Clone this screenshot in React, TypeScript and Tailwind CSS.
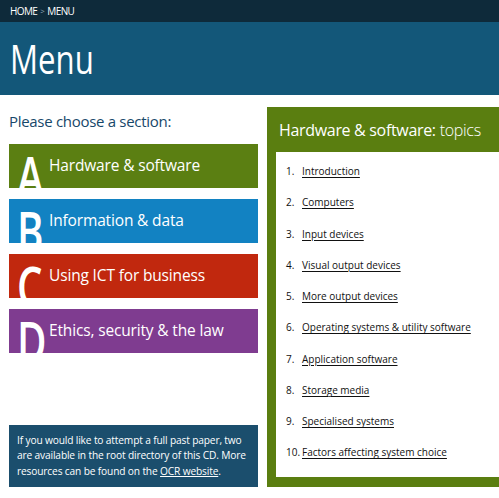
const sections = [
  {letter: 'A', label: 'Hardware & software', bg: 'bg-[#5b7f12]'},
  {letter: 'B', label: 'Information & data', bg: 'bg-[#1282c2]'},
  {letter: 'C', label: 'Using ICT for business', bg: 'bg-[#c1280e]'},
  {letter: 'D', label: 'Ethics, security & the law', bg: 'bg-[#7f3c90]'},
]

const topics = [
  'Introduction',
  'Computers',
  'Input devices',
  'Visual output devices',
  'More output devices',
  'Operating systems & utility software',
  'Application software',
  'Storage media',
  'Specialised systems',
  'Factors affecting system choice',
]

export default function App() {
  return (
    <div className="flex h-[498px] w-[499px] flex-col overflow-hidden bg-white font-['Open_Sans',sans-serif]">
      <div className="flex h-[22px] shrink-0 items-center bg-[#0e2a3a] pl-[10px] text-[10px] uppercase tracking-[-0.06em] text-white">
        <span>Home</span>
        <span className="mx-[3px] text-[8px] text-[#8fa9b8]">&gt;</span>
        <span>Menu</span>
      </div>
      <header className="flex h-[73px] shrink-0 items-center bg-[#135779] pl-[10px]">
        <h1 className="origin-left scale-x-[0.76] text-[41px] leading-none text-white">Menu</h1>
      </header>

      <main className="flex flex-1 gap-[9px] pb-[11px] pl-[9px] pt-[12px]">
        <section className="flex w-[249px] shrink-0 flex-col justify-between">
          <div>
            <p className="mt-[4px] text-[15px] leading-[20px] tracking-[-0.02em] text-[#17486a]">
              Please choose a section:
            </p>
            <ul className="mt-[13px] flex flex-col gap-[11px]">
              {sections.map((s) => (
                <li key={s.letter} className={`flex h-[44px] overflow-hidden ${s.bg}`}>
                  <span className="w-[40px] shrink-0 pl-[8px] pt-[3px]">
                    <span className="block origin-left scale-x-[0.72] text-[56px] font-semibold leading-none text-white">
                      {s.letter}
                    </span>
                  </span>
                  <span className="self-center text-[15.5px] tracking-[-0.01em] text-white">{s.label}</span>
                </li>
              ))}
            </ul>
          </div>
          <div className="bg-[#1b4e6d] px-[8px] py-[8px] text-[10.2px] leading-[15.5px] tracking-[-0.015em] text-white">
            If you would like to attempt a full past paper, two are available in the root directory of this CD. More
            resources can be found on the <span className="underline">OCR website</span>.
          </div>
        </section>

        <section className="flex w-[245px] shrink-0 flex-col bg-[#5a7e10] px-[9px] pb-[10px]">
          <h2 className="flex h-[45px] items-center pl-[3px] text-[16px] tracking-[-0.02em] text-white">
            <span className="font-medium">Hardware &amp; software:</span>
            <span className="ml-[4px] font-light">topics</span>
          </h2>
          <ol className="flex-1 bg-white pl-[10px] pt-[4px] text-[10px] text-[#111]">
            {topics.map((t, i) => (
              <li key={t} className="flex h-[31.25px] items-center">
                <span className="w-[16px] shrink-0">{i + 1}.</span>
                <span className="underline underline-offset-[2px]">{t}</span>
              </li>
            ))}
          </ol>
        </section>
      </main>
    </div>
  )
}
